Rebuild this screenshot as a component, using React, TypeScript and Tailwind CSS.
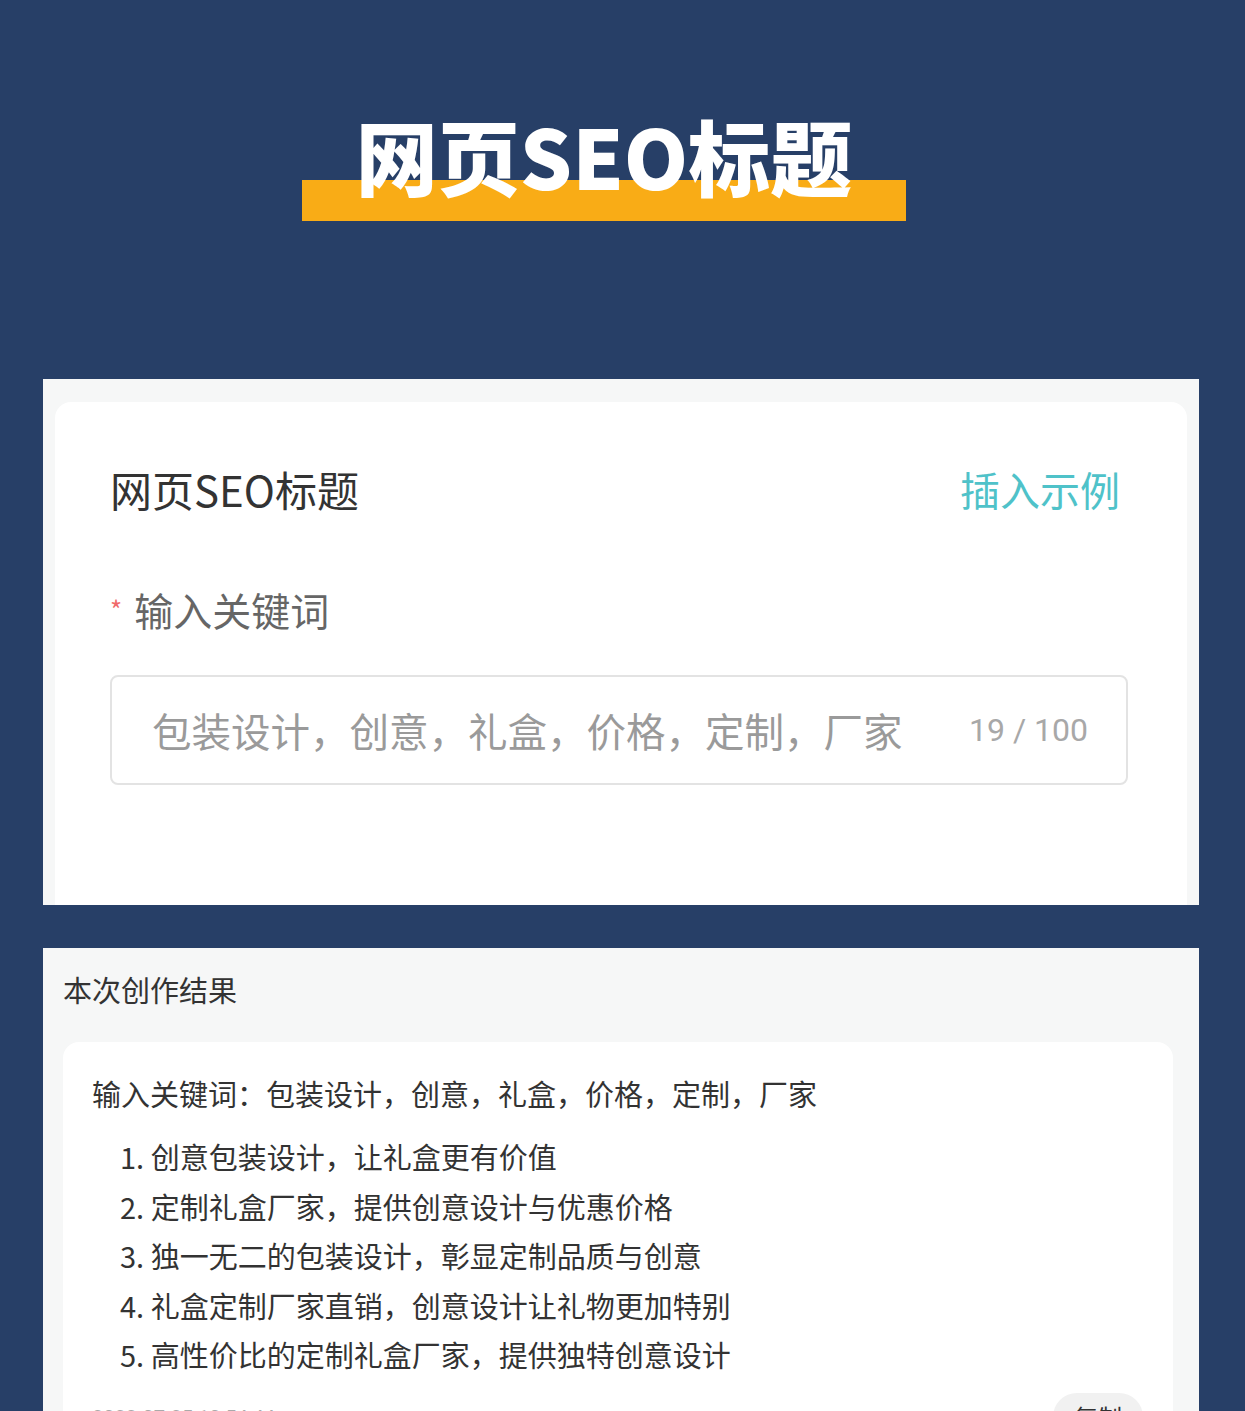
const KEYWORDS = "包装设计，创意，礼盒，价格，定制，厂家";

const RESULTS = [
  "创意包装设计，让礼盒更有价值",
  "定制礼盒厂家，提供创意设计与优惠价格",
  "独一无二的包装设计，彰显定制品质与创意",
  "礼盒定制厂家直销，创意设计让礼物更加特别",
  "高性价比的定制礼盒厂家，提供独特创意设计",
];

const FONT = "font-['Noto_Sans_CJK_SC','Noto_Sans',sans-serif]";

function Hero() {
  return (
    <div className="flex h-[379px] pl-[302px] pt-[114px]">
      <div className="relative h-[107px] w-[604px]">
        <h1 className="relative z-10 text-center text-[82px] font-black leading-[82px] text-white">
          网页SEO标题
        </h1>
        <div className="absolute bottom-0 left-0 right-0 h-[41px] bg-[#f9ac16]" />
      </div>
    </div>
  );
}

function InputCard() {
  return (
    <section className="ml-[43px] mr-[46px] bg-[#f6f7f7] px-3 pt-[23px]">
      <div className="rounded-t-2xl bg-white pb-[120px] pl-[55px] pr-[59px] pt-[59px]">
        <div className="flex items-center justify-between leading-[56px]">
          <h2 className="text-[42px] text-[#333]">网页SEO标题</h2>
          <button className="mr-2 text-[40px] text-[#4fc2c9]">插入示例</button>
        </div>
        <div className="mt-16 flex items-center leading-[56px]">
          <span className="mr-3 text-[26px] text-[#f06a6a]">*</span>
          <span className="text-[39px] text-[#666]">输入关键词</span>
        </div>
        <div className="mt-[38px] flex h-[110px] items-center justify-between rounded-lg border-2 border-[#e3e3e3] pl-[40px] pr-[38px]">
          <span className="text-[39.5px] text-[#9a9a9a]">{KEYWORDS}</span>
          <span className="font-['Roboto',sans-serif] text-[32px] text-[#a8a8a8]">19 / 100</span>
        </div>
      </div>
    </section>
  );
}

function ResultCard() {
  return (
    <section className="ml-[43px] mr-[46px] mt-[43px] bg-[#f6f7f7] pl-5 pr-[26px] pt-[21px]">
      <h3 className="text-[29px] leading-[40px] text-[#333]">本次创作结果</h3>
      <div className="mt-[33px] rounded-2xl bg-white pb-6 pl-[29px] pr-[30px] pt-[31px]">
        <p className="text-[29px] leading-[40px] text-[#333]">输入关键词：{KEYWORDS}</p>
        <ol className="ml-7 mt-[19px] text-[29px] leading-[49.5px] text-[#333]">
          {RESULTS.map((line, i) => (
            <li key={line}>
              {i + 1}. {line}
            </li>
          ))}
        </ol>
        <div className="mt-[13px] flex items-start justify-between">
          <span className="mt-[10px] font-['Roboto',sans-serif] text-[20px] text-[#aaa]">2023-07-25 10:54:44</span>
          <button className="h-[48px] w-[90px] rounded-full bg-[#f1f1f1] text-[24px] text-[#333]">复制</button>
        </div>
      </div>
    </section>
  );
}

export default function App() {
  return (
    <div className={`min-h-screen w-full bg-[#273f67] pb-10 ${FONT}`}>
      <Hero />
      <InputCard />
      <ResultCard />
    </div>
  );
}
